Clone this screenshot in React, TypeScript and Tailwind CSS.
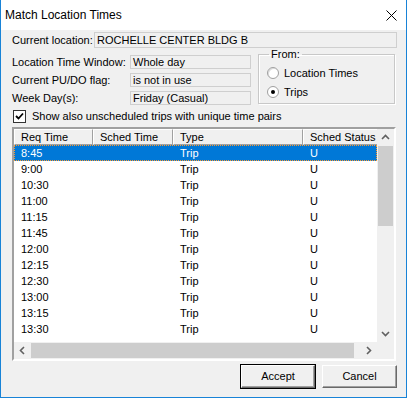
import React from 'react';

const rows = ['8:45', '9:00', '10:30', '11:00', '11:15', '11:45', '12:00', '12:15', '12:30', '13:00', '13:15', '13:30'];

const Chevron: React.FC<{ dir: 'up' | 'down' | 'left' | 'right' }> = ({ dir }) => {
  const d = {
    up: 'M1 6 L4.5 2.5 L8 6',
    down: 'M1 3 L4.5 6.5 L8 3',
    left: 'M6 1 L2.5 4.5 L6 8',
    right: 'M3 1 L6.5 4.5 L3 8',
  }[dir];
  return (
    <svg width="9" height="9" viewBox="0 0 9 9">
      <path d={d} fill="none" stroke="#606060" strokeWidth="1.6" />
    </svg>
  );
};

const Field: React.FC<{ children: React.ReactNode; className?: string }> = ({ children, className }) => (
  <div className={`border border-[#cfcfcf] bg-[#f0f0f0] flex items-center pl-[2px] leading-none ${className ?? ''}`}>
    {children}
  </div>
);

const HeaderCell: React.FC<{ label: string; w: string }> = ({ label, w }) => (
  <div className={`${w} shrink-0 h-full border-t border-l border-white border-r border-b border-r-[#a0a0a0] border-b-[#a0a0a0] flex items-center pl-[6px] whitespace-nowrap overflow-hidden`}>
    {label}
  </div>
);

export default function App() {
  return (
    <div className="w-[407px] h-[398px] border-x border-b border-[#1883d7] bg-[#f0f0f0] flex flex-col font-['Liberation_Sans',Arial,sans-serif] text-[11px] text-black overflow-hidden">
      <header className="h-[30px] shrink-0 bg-white flex items-center justify-between pl-[4px] pr-[9px]">
        <span className="text-[12px]">Match Location Times</span>
        <svg width="11" height="11" viewBox="0 0 11 11">
          <path d="M0.5 0.5 L10.5 10.5 M10.5 0.5 L0.5 10.5" stroke="#000" strokeWidth="1" />
        </svg>
      </header>

      <main className="flex-1 flex flex-col pl-[11px] pr-[9px] pt-[2px]">
        <div className="flex items-center h-[16px]">
          <span className="w-[82px] shrink-0">Current location:</span>
          <Field className="flex-1 h-[16px]">ROCHELLE CENTER BLDG B</Field>
        </div>

        <div className="flex mt-[7px]">
          <div className="flex flex-col gap-[4px] w-[240px]">
            <div className="flex items-center h-[14px]">
              <span className="w-[118px] shrink-0">Location Time Window:</span>
              <Field className="w-[121px] h-[14px]">Whole day</Field>
            </div>
            <div className="flex items-center h-[14px]">
              <span className="w-[118px] shrink-0">Current PU/DO flag:</span>
              <Field className="w-[121px] h-[14px]">is not in use</Field>
            </div>
            <div className="flex items-center h-[14px]">
              <span className="w-[118px] shrink-0">Week Day(s):</span>
              <Field className="w-[121px] h-[14px]">Friday (Casual)</Field>
            </div>
          </div>

          <fieldset className="ml-[6px] w-[137px] h-[55px] -mt-[6px] border border-[#c8c8c8] shadow-[inset_1px_1px_0_#fff,1px_1px_0_#fff] px-[8px] pt-0 pb-0">
            <legend className="px-[2px] ml-[2px] leading-none">From:</legend>
            <div className="flex flex-col gap-[7px] mt-[7px]">
              <label className="flex items-center gap-[5px] h-[12px]">
                <span className="w-[12px] h-[12px] rounded-full border border-[#a0a0a0] bg-white shadow-[inset_1px_1px_0_#dcdcdc]" />
                Location Times
              </label>
              <label className="flex items-center gap-[5px] h-[12px]">
                <span className="w-[12px] h-[12px] rounded-full border border-[#a0a0a0] bg-white flex items-center justify-center">
                  <span className="w-[4px] h-[4px] rounded-full bg-black" />
                </span>
                Trips
              </label>
            </div>
          </fieldset>
        </div>

        <label className="flex items-center gap-[6px] mt-[5px] h-[13px] ml-[1px]">
          <span className="w-[13px] h-[13px] border border-[#333] bg-white flex items-center justify-center">
            <svg width="9" height="9" viewBox="0 0 9 9">
              <path d="M1 4 L3.5 6.5 L8 1.5" fill="none" stroke="#000" strokeWidth="1.8" />
            </svg>
          </span>
          Show also unscheduled trips with unique time pairs
        </label>

        <div className="mt-[4px] w-[384px] h-[234px] border-2 border-t-[#a0a0a0] border-l-[#a0a0a0] border-r-white border-b-white shadow-[inset_1px_1px_0_#696969] flex flex-col">
          <div className="flex flex-1 min-h-0">
            <div className="flex-1 min-w-0 flex flex-col bg-white overflow-hidden">
              <div className="h-[16px] shrink-0 flex bg-[#f0f0f0]">
                <HeaderCell label="Req Time" w="w-[79px]" />
                <HeaderCell label="Sched Time" w="w-[80px]" />
                <HeaderCell label="Type" w="w-[130px]" />
                <HeaderCell label="Sched Status" w="w-[80px]" />
              </div>
              {rows.map((t, i) => (
                <div
                  key={t}
                  className={`h-[16px] shrink-0 flex items-center ${
                    i === 0 ? 'bg-[#0078d7] text-white outline-1 outline-dotted outline-[#ff9a2e] -outline-offset-1' : ''
                  }`}
                >
                  <span className="w-[159px] shrink-0 pl-[7px]">{t}</span>
                  <span className="w-[130px] shrink-0 pl-[7px]">Trip</span>
                  <span className="pl-[7px]">U</span>
                </div>
              ))}
            </div>
            <div className="w-[17px] shrink-0 flex flex-col bg-[#f0f0f0]">
              <div className="h-[17px] flex items-center justify-center">
                <Chevron dir="up" />
              </div>
              <div className="h-[80px] bg-[#cdcdcd] mx-[1px]" />
              <div className="flex-1" />
              <div className="h-[17px] flex items-center justify-center">
                <Chevron dir="down" />
              </div>
            </div>
          </div>
          <div className="h-[17px] shrink-0 flex">
            <div className="flex-1 flex bg-[#f0f0f0]">
              <div className="w-[17px] flex items-center justify-center">
                <Chevron dir="left" />
              </div>
              <div className="w-[323px] bg-[#cdcdcd] my-[1px]" />
              <div className="flex-1" />
              <div className="w-[17px] flex items-center justify-center">
                <Chevron dir="right" />
              </div>
            </div>
            <div className="w-[17px] bg-[#f0f0f0]" />
          </div>
        </div>

        <div className="flex justify-end gap-[7px] mt-[4px] pr-0">
          <button className="w-[74px] h-[23px] bg-[#f0f0f0] border border-t-white border-l-white border-r-[#696969] border-b-[#696969] shadow-[0_0_0_1px_#000,inset_-1px_-1px_0_#a0a0a0] flex items-center justify-center">
            Accept
          </button>
          <button className="w-[75px] h-[23px] bg-[#f0f0f0] border border-t-white border-l-white border-r-[#696969] border-b-[#696969] shadow-[inset_-1px_-1px_0_#a0a0a0] flex items-center justify-center">
            Cancel
          </button>
        </div>
      </main>
    </div>
  );
}
